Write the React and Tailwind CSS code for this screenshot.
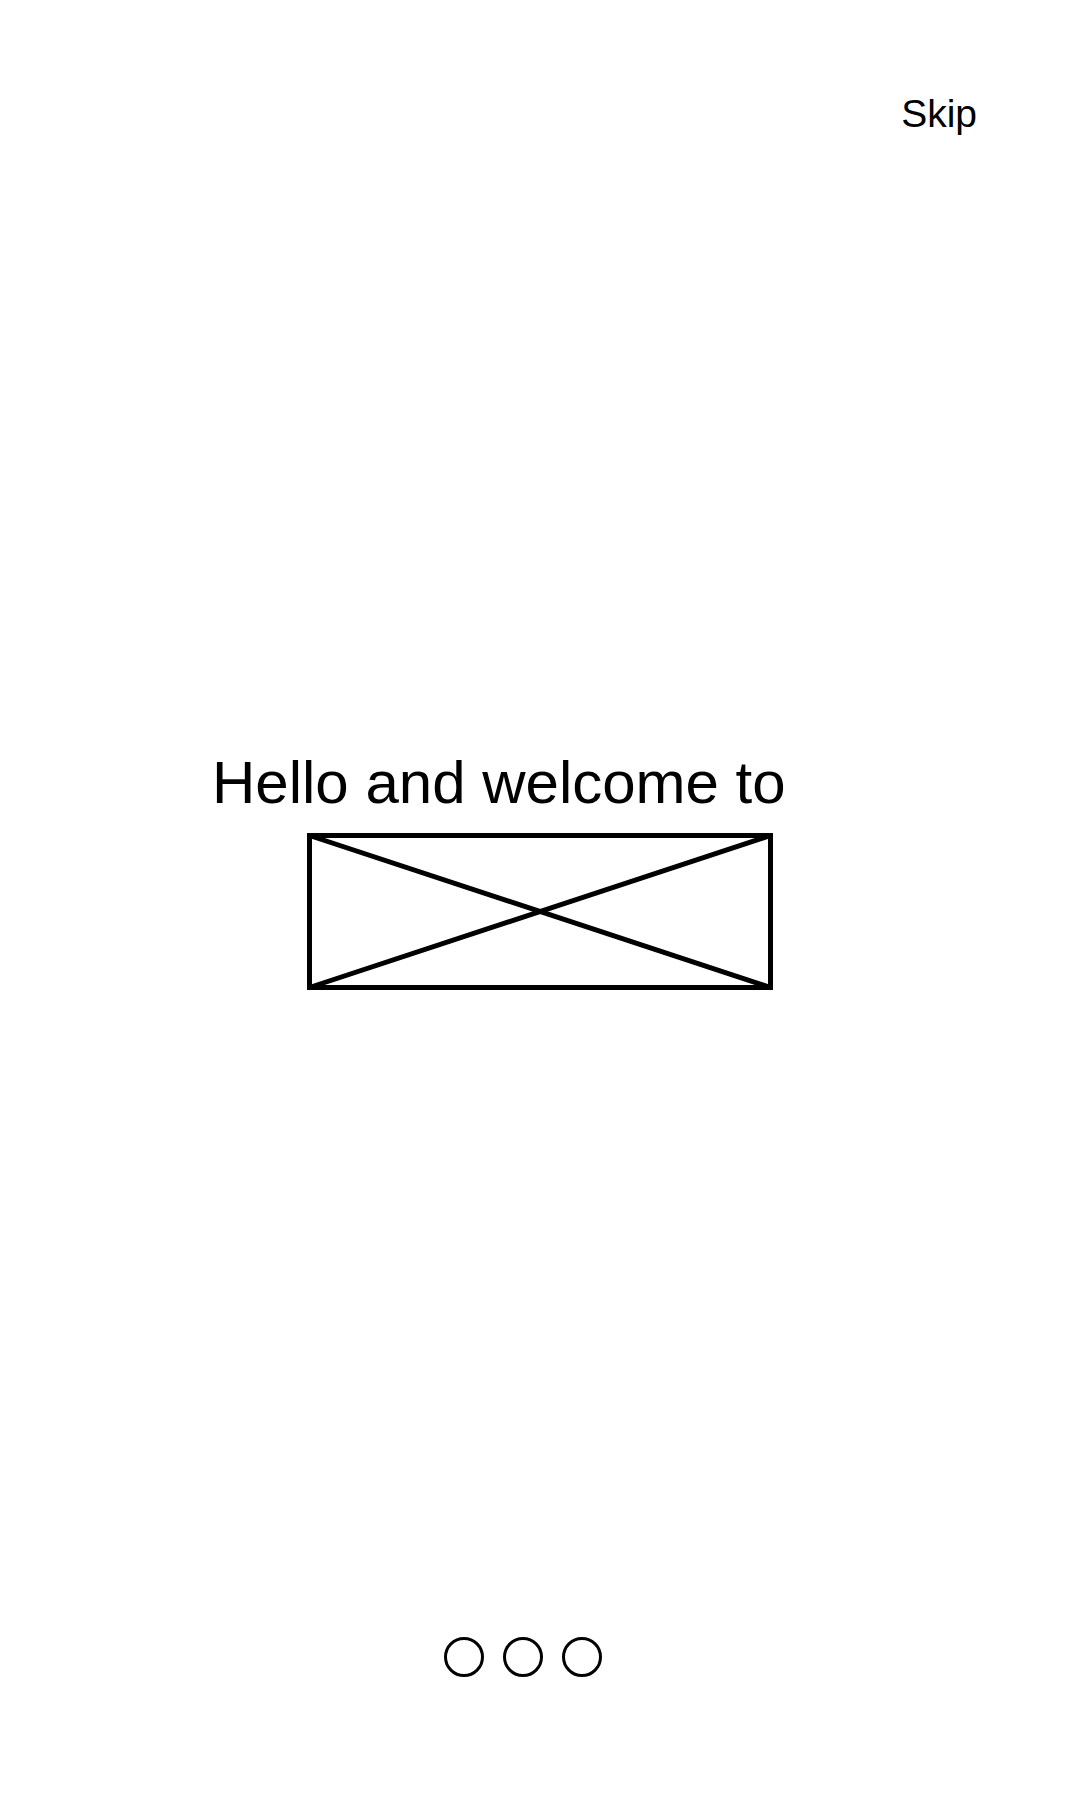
export default function App() {
  return (
    <div className="min-h-[1800px] w-[1080px] bg-white text-black flex flex-col" style={{ fontFamily: '"Liberation Sans", Arial, sans-serif' }}>
      <div className="flex justify-end pt-[94px] pr-[103px]">
        <button className="text-[39px] leading-none">Skip</button>
      </div>

      <h1 className="mt-[620px] pl-[212px] text-[60px] leading-none font-normal">Hello and welcome to</h1>

      <div className="mt-[20px] ml-[307px]">
        <LogoPlaceholder />
      </div>

      <div className="mt-[647px] ml-[444px] flex items-center gap-[19px]">
        <span className="w-[40px] h-[40px] rounded-full border-[3px] border-black" />
        <span className="w-[40px] h-[40px] rounded-full border-[3px] border-black" />
        <span className="w-[40px] h-[40px] rounded-full border-[3px] border-black" />
      </div>
    </div>
  )
}

function LogoPlaceholder() {
  return (
    <svg width="466" height="157" viewBox="0 0 466 157" className="block">
      <rect x="2.5" y="2.5" width="461" height="152" fill="none" stroke="black" strokeWidth="5" />
      <line x1="2.5" y1="2.5" x2="463.5" y2="154.5" stroke="black" strokeWidth="5" />
      <line x1="463.5" y1="2.5" x2="2.5" y2="154.5" stroke="black" strokeWidth="5" />
    </svg>
  )
}
